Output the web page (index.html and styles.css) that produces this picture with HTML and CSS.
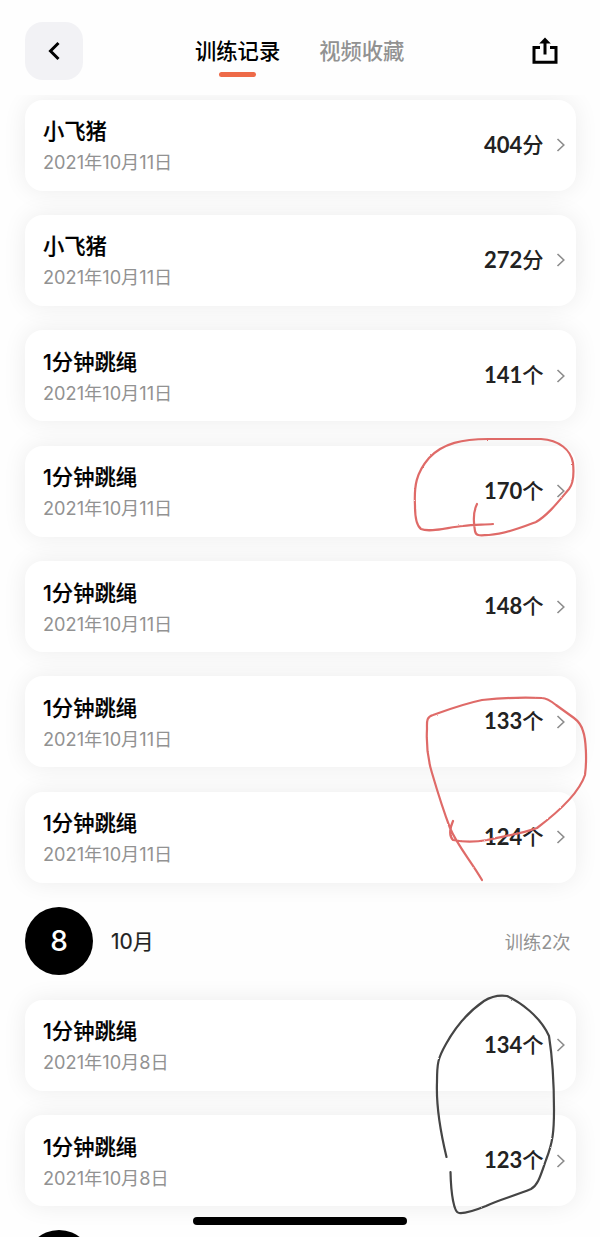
FILE: index.html
```html
<!DOCTYPE html>
<html lang="zh-CN">
<head>
    <meta charset="UTF-8">
    <meta name="viewport" content="width=device-width, initial-scale=1.0">
    <title>训练记录</title>
    <link rel="stylesheet" href="styles.css">
</head>
<body>
    <!-- 图标 -->
    <svg class="sprite" width="0" height="0">
        <symbol id="arrow" viewBox="0 0 10 16">
            <path d="M1.5 2l6.3 6-6.3 6" fill="none" stroke="#8c8c8c" stroke-width="1.6"/>
        </symbol>
    </svg>

    <!-- 顶部导航 -->
    <header>
        <button class="back-btn" aria-label="返回">
            <svg width="14" height="20" viewBox="0 0 14 20"><path d="M11.5 2L3.5 10l8 8" fill="none" stroke="#000" stroke-width="3"/></svg>
        </button>
        <nav class="tabs">
            <a class="tab active">训练记录</a>
            <a class="tab">视频收藏</a>
        </nav>
        <button class="share-btn" aria-label="分享">
            <svg width="26" height="28" viewBox="0 0 26 28">
                <path d="M8 10.5H2v14.700h22V10.500h-6" fill="none" stroke="#000" stroke-width="3"/>
                <path d="M13 17.500V5" stroke="#000" stroke-width="3"/>
                <path d="M13 0.500l5.800 6H7.200z"/>
            </svg>
        </button>
    </header>

    <!-- 训练列表 -->
    <main>
        <div class="record-list">
            <div class="record">
                <div class="info"><h3>小飞猪</h3><p>2021年10月11日</p></div>
                <span class="score">404<em>分</em></span><svg class="arrow"><use href="#arrow"/></svg>
            </div>
            <div class="record">
                <div class="info"><h3>小飞猪</h3><p>2021年10月11日</p></div>
                <span class="score">272<em>分</em></span><svg class="arrow"><use href="#arrow"/></svg>
            </div>
            <div class="record">
                <div class="info"><h3>1分钟跳绳</h3><p>2021年10月11日</p></div>
                <span class="score">141<em>个</em></span><svg class="arrow"><use href="#arrow"/></svg>
            </div>
            <div class="record">
                <div class="info"><h3>1分钟跳绳</h3><p>2021年10月11日</p></div>
                <span class="score">170<em>个</em></span><svg class="arrow"><use href="#arrow"/></svg>
            </div>
            <div class="record">
                <div class="info"><h3>1分钟跳绳</h3><p>2021年10月11日</p></div>
                <span class="score">148<em>个</em></span><svg class="arrow"><use href="#arrow"/></svg>
            </div>
            <div class="record">
                <div class="info"><h3>1分钟跳绳</h3><p>2021年10月11日</p></div>
                <span class="score">133<em>个</em></span><svg class="arrow"><use href="#arrow"/></svg>
            </div>
            <div class="record">
                <div class="info"><h3>1分钟跳绳</h3><p>2021年10月11日</p></div>
                <span class="score">124<em>个</em></span><svg class="arrow"><use href="#arrow"/></svg>
            </div>
        </div>

        <div class="day">
            <span class="day-num">8</span>
            <span class="month">10月</span>
            <span class="count">训练2次</span>
        </div>

        <div class="record-list">
            <div class="record">
                <div class="info"><h3>1分钟跳绳</h3><p>2021年10月8日</p></div>
                <span class="score">134<em>个</em></span><svg class="arrow"><use href="#arrow"/></svg>
            </div>
            <div class="record">
                <div class="info"><h3>1分钟跳绳</h3><p>2021年10月8日</p></div>
                <span class="score">123<em>个</em></span><svg class="arrow"><use href="#arrow"/></svg>
            </div>
        </div>

        <!-- 下一天，只露出圆的顶部 -->
        <div class="day-next"></div>
    </main>

    <!-- 手绘标记 -->
    <svg class="marks" width="600" height="1237" viewBox="0 0 600 1237">
        <filter id="crayon" x="-5%" y="-5%" width="110%" height="110%">
            <feTurbulence type="fractalNoise" baseFrequency="0.7" numOctaves="2" result="noise"/>
            <feDisplacementMap in="SourceGraphic" in2="noise" scale="1.6" xChannelSelector="R" yChannelSelector="G"/>
        </filter>
        <g class="red" filter="url(#crayon)">
            <path d="M477 504C474 510 473 520 475 531C476 537 482 535 489 535C506 534 523 527 536 522C548 515 558 502 569 489C573 484 574 473 573 463C571 450 559 440 541 439H488C463 439 443 443 429 458C416 473 414 486 415 506C415 518 417 526 421 529C430 533 449 527 463 526C474 524 483 525 493 524"/>
            <path d="M453 821C450 828 449 836 453 840C463 842 476 842 487 840C504 836 521 834 537 828C553 816 578 796 585 775C587 760 586 739 583 731C581 724 578 721 574 718L556 705C551 701 547 698 542 698C521 697 501 698 482 700C463 704 447 710 433 715C426 717 427 722 427 729C426 747 428 760 432 773C437 790 442 807 450 828C457 845 471 861 482 880"/>
        </g>
        <g class="black" filter="url(#crayon)">
            <path d="M446.500 1157C440 1130 436 1106 437 1082C437 1063 438 1058 446 1044C456 1026 468 1012 484 1001C492 996 500 995 507 996C520 1002 540 1016 549 1036C552 1055 554 1083 554 1110C554 1131 553 1142 546 1160C540 1177 538 1185 531 1189C514 1196 498 1200 486 1206C476 1210 465 1214 459 1213C454 1213 451 1194 450.500 1172"/>
        </g>
    </svg>

    <div class="home-bar"></div>
</body>
</html>
```
FILE: styles.css
```css
:root {
    --accent: #ee6a48;
    --gray: #929292;
    --shadow: 0 0 24px rgba(0, 0, 0, 0.075);
}

* {
    margin: 0;
    padding: 0;
    box-sizing: border-box;
}

body {
    position: relative;
    height: 1237px;
    overflow: hidden;
    background: #fefefe;
    color: #000;
    font-family: Inter, 'Noto Sans CJK SC', sans-serif;
}

button {
    border: none;
    background: none;
}

.sprite {
    position: absolute;
}

/* 顶部导航 */
header {
    position: relative;
    z-index: 2;
    display: flex;
    align-items: center;
    height: 95px;
    padding: 7px 42px 0 25px;
    background: #fefefe;
}

.back-btn {
    display: flex;
    align-items: center;
    justify-content: center;
    width: 58px;
    height: 58px;
    border-radius: 18px;
    background: #f2f2f5;
}

.tabs {
    display: flex;
    gap: 39px;
    margin-left: 112px;
}

.tab {
    display: flex;
    flex-direction: column;
    align-items: center;
    height: 54px;
    font-size: 21.3px;
    line-height: 54px;
    font-weight: 500;
    color: var(--gray);
}

.tab.active {
    color: #000;
}

.tab.active::after {
    content: '';
    width: 37px;
    height: 5px;
    margin-top: -6px;
    border-radius: 3px;
    background: var(--accent);
    flex-shrink: 0;
}

.share-btn {
    height: 28px;
    margin-left: auto;
}

.share-btn svg {
    display: block;
}

/* 训练列表 */
main {
    height: 1142px;
    padding: 4.500px 24.500px 0 25px;
    overflow: hidden;
}

.record-list {
    display: flex;
    flex-direction: column;
    gap: 24.400px;
}

.record {
    display: flex;
    align-items: center;
    height: 91px;
    padding: 0 10px 0 18px;
    border-radius: 18px;
    background: #fff;
    box-shadow: var(--shadow);
}

.info {
    flex: 1;
    padding-top: 2px;
}

.info h3 {
    font-size: 21.3px;
    line-height: 32px;
    font-weight: 500;
    -webkit-text-stroke: 0.2px #000;
}

.info p {
    font-size: 18.2px;
    line-height: 30px;
    color: var(--gray);
}

.score {
    padding-bottom: 4px;
    font-family: Lato, 'Noto Sans CJK SC', sans-serif;
    font-size: 22px;
    font-weight: 700;
    color: #222;
}

.score em {
    font-size: 21.3px;
    font-style: normal;
    font-weight: 500;
}

.arrow {
    width: 10px;
    height: 16px;
    margin-left: 12px;
}

.day {
    display: flex;
    align-items: center;
    height: 68px;
    margin: 24px 0 25px;
    padding-right: 5px;
}

.day-num {
    width: 68px;
    height: 68px;
    border-radius: 50%;
    background: #000;
    color: #fff;
    font-size: 28px;
    line-height: 68px;
    font-weight: 500;
    text-align: center;
}

.month {
    margin-left: 18px;
    padding-bottom: 2px;
    font-size: 21px;
    color: #222;
    -webkit-text-stroke: 0.2px #222;
}

.count {
    margin-left: auto;
    font-size: 18.2px;
    color: var(--gray);
}

.day-next {
    width: 68px;
    height: 34px;
    margin-top: 24px;
    border-radius: 34px 34px 0 0;
    background: #000;
}

/* 手绘标记 */
.marks {
    position: absolute;
    top: 0;
    left: 0;
    z-index: 3;
    fill: none;
    stroke-width: 2.2;
    stroke-linecap: round;
    pointer-events: none;
}

.marks .red {
    stroke: #df6b68;
}

.marks .black {
    stroke: #444;
}

.home-bar {
    position: absolute;
    left: 193px;
    bottom: 12px;
    z-index: 4;
    width: 214px;
    height: 8px;
    border-radius: 4px;
    background: #000;
}
```
